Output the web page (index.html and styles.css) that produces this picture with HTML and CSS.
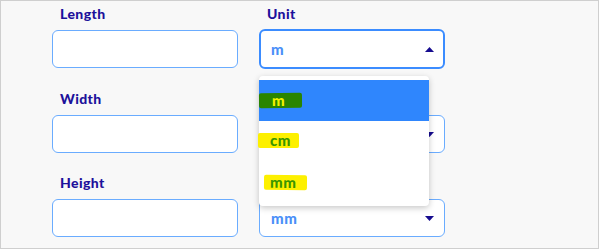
FILE: index.html
```html
<!DOCTYPE html>
<html lang="en">
<head>
  <meta charset="UTF-8">
  <meta name="viewport" content="width=device-width, initial-scale=1.0">
  <title>Dimensions</title>
  <link rel="stylesheet" href="styles.css">
</head>
<body>

<div class="frame">
  <div class="form">
    <div class="field">
      <label for="length">Length</label>
      <input type="text" id="length">
    </div>
    <div class="field">
      <label>Unit</label>
      <div class="select focused">
        <span class="value">m</span>
        <svg class="arrow" width="9" height="5" viewBox="0 0 9 5"><path d="M0 5 L4.5 0 L9 5 Z" fill="#160c8f"/></svg>
      </div>
    </div>

    <div class="field">
      <label for="width">Width</label>
      <input type="text" id="width">
    </div>
    <div class="field">
      <label class="empty"></label>
      <div class="select">
        <span class="value">m</span>
        <svg class="arrow" width="9" height="5" viewBox="0 0 9 5"><path d="M0 0 L4.5 5 L9 0 Z" fill="#160c8f"/></svg>
      </div>
    </div>

    <div class="field">
      <label for="height">Height</label>
      <input type="text" id="height">
    </div>
    <div class="field">
      <label class="empty"></label>
      <div class="select">
        <span class="value">mm</span>
        <svg class="arrow" width="9" height="5" viewBox="0 0 9 5"><path d="M0 0 L4.5 5 L9 0 Z" fill="#160c8f"/></svg>
      </div>
    </div>
  </div>

  <!-- open list of the Unit select -->
  <ul class="dropdown">
    <li class="option selected"><span class="mark mark-m">m</span></li>
    <li class="option"><span class="mark mark-cm">cm</span></li>
    <li class="option"><span class="mark mark-mm">mm</span></li>
  </ul>
</div>

</body>
</html>
```

FILE: styles.css
```css
body {
  margin: 0;
  font-family: Lato, "Open Sans", sans-serif;
}
.frame {
  position: relative;
  width: 599px;
  height: 249px;
  box-sizing: border-box;
  border: 1px solid #cfcfcf;
  background: #f8f8f8;
  overflow: hidden;
}
.form {
  display: grid;
  grid-template-columns: 186px 186px;
  column-gap: 21px;
  row-gap: 21px;
  padding: 4px 0 0 51px;
}
.field {
  display: flex;
  flex-direction: column;
}
label {
  display: block;
  height: 17px;
  line-height: 17px;
  margin: 0 0 8px 8px;
  font-size: 14px;
  font-weight: 900;
  color: #1d119b;
  letter-spacing: 0.4px;
}
input {
  height: 38px;
  box-sizing: border-box;
  border: 1px solid #6aacff;
  border-radius: 6px;
  background: #fff;
  padding: 0 10px;
  outline: none;
}
.select {
  height: 38px;
  box-sizing: border-box;
  border: 1px solid #6aacff;
  border-radius: 6px;
  background: #fff;
  display: flex;
  align-items: center;
  justify-content: space-between;
  padding: 0 10px 0 11px;
}
.select.focused {
  height: 40px;
  margin-top: -1px;
  border: 2px solid #3b8cff;
  padding: 0 9px 0 10px;
}
.value {
  font-size: 15px;
  font-weight: 900;
  color: #4a8ff8;
  letter-spacing: 0.6px;
}
.arrow {
  display: block;
}
.dropdown {
  position: absolute;
  left: 258px;
  top: 75px;
  width: 170px;
  margin: 0;
  padding: 4px 0;
  list-style: none;
  background: #fff;
  border-radius: 4px;
  box-shadow: 0 2px 6px rgba(0, 0, 0, 0.22);
}
.option {
  height: 40.5px;
  display: flex;
  align-items: center;
  font-size: 15px;
  font-weight: 900;
  letter-spacing: 0.6px;
}
.option.selected {
  background: #2f86fd;
}
.mark {
  line-height: 15px;
  border-radius: 2px;
}
.mark-m {
  background: #2a8500;
  color: #f2f200;
  padding: 0 17px 0 13px;
  transform: rotate(-0.5deg);
}
.mark-cm {
  background: #fdf000;
  color: #3a9500;
  padding: 0 8px 0 12px;
  margin-left: -1px;
}
.mark-mm {
  background: #fdf000;
  color: #3a9500;
  padding: 0 10px 0 6px;
  margin-left: 5px;
  margin-top: 3px;
  transform: rotate(0.5deg);
}
```
